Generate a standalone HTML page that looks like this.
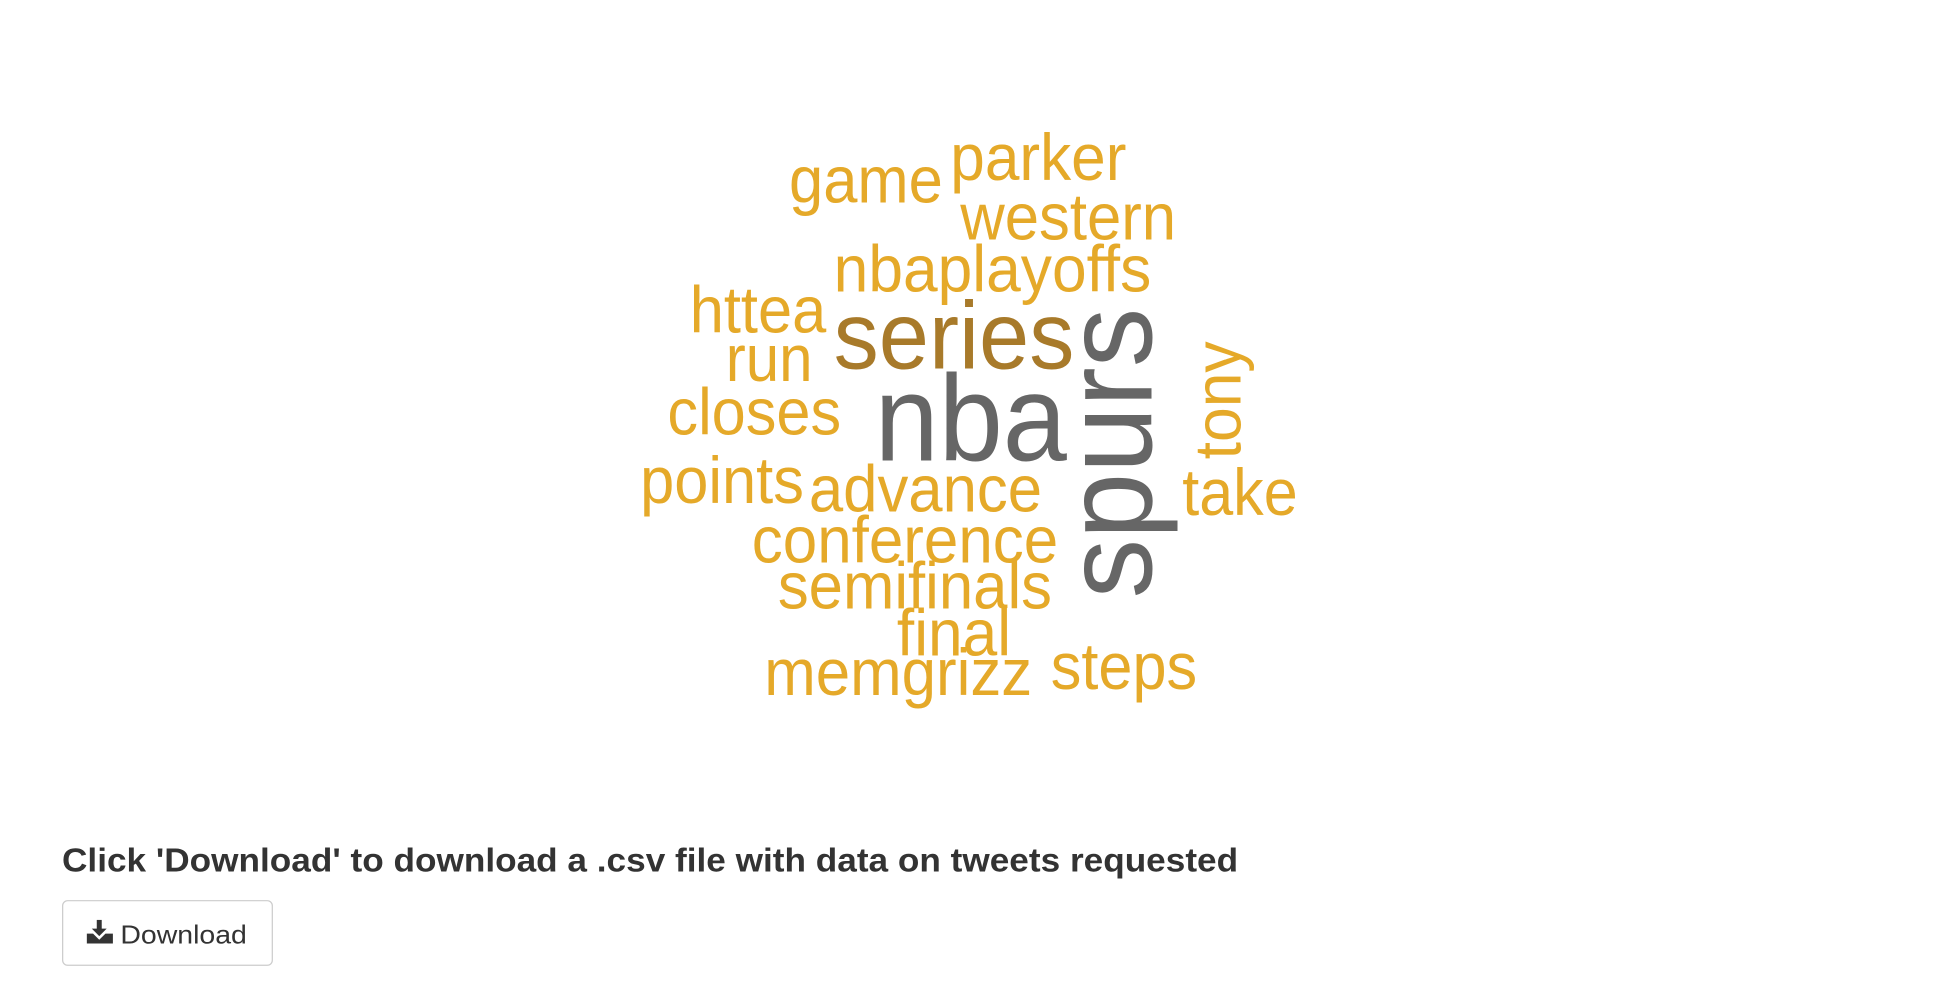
<!DOCTYPE html>
<html><head><meta charset="utf-8"><style>
html,body{margin:0;padding:0;background:#fff;width:1944px;height:982px;overflow:hidden}
svg{display:block}
text{font-family:"Liberation Sans",Arial,sans-serif}
</style></head><body>
<svg width="1944" height="982" viewBox="0 0 1567 791" preserveAspectRatio="none">
<g fill="#e5a929" font-size="53">
<text x="636" y="163" textLength="124" lengthAdjust="spacingAndGlyphs">game</text>
<text x="766" y="145" textLength="142" lengthAdjust="spacingAndGlyphs">parker</text>
<text x="774" y="193" textLength="174" lengthAdjust="spacingAndGlyphs">western</text>
<text x="672" y="235" textLength="256" lengthAdjust="spacingAndGlyphs">nbaplayoffs</text>
<text x="556" y="268" textLength="110" lengthAdjust="spacingAndGlyphs">httea</text>
<text x="585" y="307" textLength="70" lengthAdjust="spacingAndGlyphs">run</text>
<text x="538" y="350" textLength="140" lengthAdjust="spacingAndGlyphs">closes</text>
<text x="516" y="405" textLength="132" lengthAdjust="spacingAndGlyphs">points</text>
<text x="652" y="412" textLength="188" lengthAdjust="spacingAndGlyphs">advance</text>
<text x="953" y="415" textLength="93" lengthAdjust="spacingAndGlyphs">take</text>
<text x="606" y="453" textLength="247" lengthAdjust="spacingAndGlyphs">conference</text>
<text x="627" y="490" textLength="221" lengthAdjust="spacingAndGlyphs">semifinals</text>
<text x="723" y="528" textLength="92" lengthAdjust="spacingAndGlyphs">final</text>
<text x="616" y="560" textLength="216" lengthAdjust="spacingAndGlyphs">memgrizz</text>
<text x="847" y="555" textLength="118" lengthAdjust="spacingAndGlyphs">steps</text>
<text transform="translate(1000,370) rotate(-90)" textLength="95" lengthAdjust="spacingAndGlyphs">tony</text>
</g>
<text x="672" y="297" font-size="77" fill="#a87a2a" textLength="194" lengthAdjust="spacingAndGlyphs">series</text>
<text x="705" y="371" font-size="99" fill="#666" textLength="155" lengthAdjust="spacingAndGlyphs">nba</text>
<text transform="translate(928,482) rotate(-90)" font-size="101" fill="#666" textLength="234" lengthAdjust="spacingAndGlyphs">spurs</text>

<text x="50" y="702" font-size="27" font-weight="bold" fill="#333" textLength="948" lengthAdjust="spacingAndGlyphs">Click 'Download' to download a .csv file with data on tweets requested</text>
<rect x="50.5" y="725.5" width="169" height="52" rx="4" fill="#fff" stroke="#ccc"/>
<g fill="#333">
<rect x="78" y="741" width="4" height="8"/>
<path d="M74 748 L86 748 L80 754 Z"/>
<path d="M70 752 L75 752 L80 757 L85 752 L91 752 L91 760 L70 760 Z"/>
</g>
<text x="97" y="760" font-size="21" fill="#333" textLength="102" lengthAdjust="spacingAndGlyphs">Download</text>
</svg>
</body></html>
